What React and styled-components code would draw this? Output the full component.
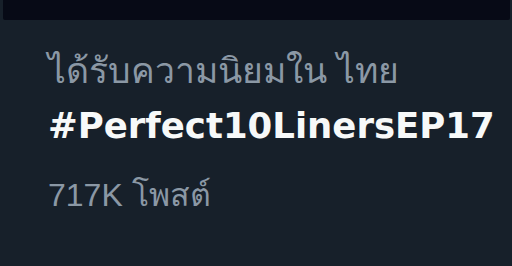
import React from "react";
import styled, { createGlobalStyle } from "styled-components";

const GlobalStyle = createGlobalStyle`
	html, body {
		margin: 0;
		padding: 0;
		background: #17202a;
	}
	body {
		font-family: "Liberation Sans", Arial, sans-serif;
		-webkit-font-smoothing: antialiased;
	}
`;

const trend = {
	context: "ได้รับความนิยมใน ไทย",
	name: "#Perfect10LinersEP17",
	posts: "717K โพสต์",
};

function App() {
	return (
		<Page>
			<GlobalStyle />
			<MediaEdge />
			<TrendItem>
				<Context>{trend.context}</Context>
				<TrendName>{trend.name}</TrendName>
				<PostCount>{trend.posts}</PostCount>
			</TrendItem>
		</Page>
	);
}

export default App;

const Page = styled.div`
	width: 512px;
	height: 266px;
	background: #17202a;
	overflow: hidden;
`;

const MediaEdge = styled.div`
	height: 20px;
	margin: 0 2px 0 3px;
	background: #070a16;
	border-radius: 0 0 2px 2px;
`;

const TrendItem = styled.div`
	display: flex;
	flex-direction: column;
	padding: 23px 0 0 48px;
`;

const Context = styled.div`
	color: #8b98a5;
	font-size: 35.5px;
	line-height: 56px;
	white-space: nowrap;
`;

const TrendName = styled.div`
	margin-top: 3px;
	color: #f7f9f9;
	font-family: "DejaVu Sans", sans-serif;
	font-weight: bold;
	font-size: 35.5px;
	line-height: 48px;
	white-space: nowrap;
`;

const PostCount = styled.div`
	margin-top: 25px;
	color: #8b98a5;
	font-size: 32px;
	line-height: 40px;
	white-space: nowrap;
`;
